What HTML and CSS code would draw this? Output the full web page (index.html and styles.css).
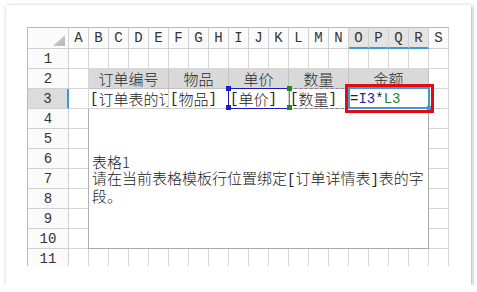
FILE: index.html
```html
<!DOCTYPE html>
<html>
<head>
<meta charset="utf-8">
<link rel="stylesheet" href="styles.css">
</head>
<body>
<div class="card">
  <div class="sheet">
    <div class="corner"><span class="tri"></span></div>
    <div class="ch">A</div><div class="ch">B</div><div class="ch">C</div><div class="ch">D</div><div class="ch">E</div>
    <div class="ch">F</div><div class="ch">G</div><div class="ch">H</div><div class="ch">I</div><div class="ch">J</div>
    <div class="ch">K</div><div class="ch">L</div><div class="ch">M</div><div class="ch">N</div>
    <div class="ch sel">O</div><div class="ch sel">P</div><div class="ch sel">Q</div><div class="ch sel">R</div>
    <div class="ch">S</div>
    <div class="rh">1</div>
    <div class="rh">2</div>
    <div class="rh sel">3</div>
    <div class="rh">4</div>
    <div class="rh">5</div>
    <div class="rh">6</div>
    <div class="rh">7</div>
    <div class="rh">8</div>
    <div class="rh">9</div>
    <div class="rh">10</div>
    <div class="rh">11</div>

    <div class="hd c-b">订单编号</div>
    <div class="hd c-f">物品</div>
    <div class="hd c-i">单价</div>
    <div class="hd c-l">数量</div>
    <div class="hd c-o">金额</div>

    <div class="dt c-b"><span class="br">[</span>订单表的订单编号<span class="br">]</span></div>
    <div class="dt c-f"><span class="br">[</span>物品<span class="br">]</span></div>
    <div class="dt c-i"><span class="br">[</span>单价<span class="br">]</span></div>
    <div class="dt c-l"><span class="br">[</span>数量<span class="br">]</span></div>
    <div class="dt c-o"><span class="formula">=<span class="ref-i">I3</span>*<span class="ref-l">L3</span></span></div>

    <div class="region"><p class="note">表格1<br>请在当前表格模板行位置绑定<span class="br">[</span>订单详情表<span class="br">]</span>表的字段。</p></div>

    <div class="sel-blue"></div>
    <div class="sel-dash"></div>
    <div class="sel-teal"></div>
    <div class="handle blue h1"></div>
    <div class="handle blue h2"></div>
    <div class="handle green h3"></div>
    <div class="handle green h4"></div>
    <div class="handle teal h5"></div>
    <div class="redbox"></div>
  </div>
</div>
</body>
</html>
```

FILE: styles.css
```css
html, body {
  margin: 0;
  background: #ffffff;
}

.card {
  margin: 5px 0 0 6px;
  width: 465px;
  height: 280px;
  box-sizing: border-box;
  padding: 22px 0 0 21px;
  background: #ffffff;
  box-shadow: 1px 1px 4px rgba(0, 0, 0, 0.35);
}

.sheet {
  position: relative;
  display: grid;
  grid-template-columns: 41px repeat(19, 20px);
  grid-template-rows: 21px repeat(11, 20px);
  width: 421px;
  height: 238px;
  overflow: hidden;
  border-left: 1px solid #b9b9b9;
  border-top: 1px solid #b9b9b9;
  background-color: #ffffff;
  background-image:
    linear-gradient(to right, #d6d6d6 1px, transparent 1px),
    linear-gradient(to bottom, #d6d6d6 1px, transparent 1px);
  background-size: 20px 20px;
  font-family: "Noto Sans CJK SC", sans-serif;
  font-weight: 300;
  font-size: 15px;
  color: #222222;
}

.corner, .ch, .rh {
  box-sizing: border-box;
  border-right: 1px solid #d0d0d0;
  border-bottom: 1px solid #d0d0d0;
  background: #fbfbfb;
  font-family: "Liberation Mono", monospace;
  font-weight: 400;
  font-size: 14px;
  line-height: 16px;
  color: #333333;
  display: flex;
  align-items: center;
  justify-content: center;
}

.rh {
  grid-column: 1;
}

.corner {
  justify-content: flex-end;
  align-items: flex-end;
  padding: 0 3px 2px 0;
}

.tri {
  width: 12px;
  height: 11px;
  background: linear-gradient(135deg, #d8d8d8, #b4b4b4);
  clip-path: polygon(100% 0, 100% 100%, 0 100%);
}

.ch.sel {
  background: #e4e4e4;
  border-bottom: 2px solid #3d9bd2;
}

.rh.sel {
  background: #dcdcdc;
  border-right: 2px solid #3d9bd2;
}

.c-b { grid-column: 3 / 7; }
.c-f { grid-column: 7 / 10; }
.c-i { grid-column: 10 / 13; }
.c-l { grid-column: 13 / 16; }
.c-o { grid-column: 16 / 20; }

.hd {
  grid-row: 3;
  box-sizing: border-box;
  background: #d9d9d9;
  border-right: 1px solid #c2c2c2;
  border-bottom: 1px solid #c2c2c2;
  display: flex;
  align-items: center;
  justify-content: center;
  line-height: 18px;
  color: #2a2a2a;
}

.dt {
  grid-row: 4;
  box-sizing: border-box;
  background: #ffffff;
  border-right: 1px solid #d0d0d0;
  border-bottom: 1px solid #d0d0d0;
  display: flex;
  align-items: center;
  padding-left: 1px;
  line-height: 18px;
  white-space: nowrap;
  overflow: hidden;
}

.br {
  font-family: "Liberation Mono", monospace;
  font-weight: 400;
  font-size: 14px;
}

.formula {
  font-family: "Liberation Mono", monospace;
  font-weight: 400;
  font-size: 14px;
  color: #222222;
}

.ref-i { color: #2424a8; }
.ref-l { color: #2b7f2b; }

.region {
  grid-column: 3 / 20;
  grid-row: 5 / 12;
  box-sizing: border-box;
  margin-left: -1px;
  background: #ffffff;
  border-left: 1px solid #b0b0b0;
  border-right: 1px solid #a8a8a8;
  border-bottom: 1px solid #a8a8a8;
  display: flex;
  align-items: center;
  padding: 0 0 0 3px;
}

.note {
  margin: 0;
  line-height: 16px;
}

.sel-blue {
  position: absolute;
  left: 200px;
  top: 60px;
  width: 62px;
  height: 21px;
  box-sizing: border-box;
  border: 1px solid #1a1ab8;
}

.sel-dash {
  position: absolute;
  left: 261px;
  top: 60px;
  width: 60px;
  height: 21px;
  box-sizing: border-box;
  border: 1px dashed #2b8a2b;
  outline: 1px solid rgba(230, 140, 230, 0.45);
  outline-offset: -1px;
}

.sel-teal {
  position: absolute;
  left: 320px;
  top: 59px;
  width: 82px;
  height: 22px;
  box-sizing: border-box;
  border: 2px solid #3f9ccc;
}

.handle {
  position: absolute;
  width: 5px;
  height: 5px;
}

.blue { background: #1a1ad0; }
.green { background: #1d8a1d; }
.teal { background: #3f9ccc; width: 4px; height: 4px; }

.h1 { left: 198px; top: 58px; }
.h2 { left: 198px; top: 77px; }
.h3 { left: 259px; top: 58px; }
.h4 { left: 259px; top: 77px; }
.h5 { left: 399px; top: 78px; }

.redbox {
  position: absolute;
  left: 317px;
  top: 56px;
  width: 89px;
  height: 29px;
  box-sizing: border-box;
  border: 3px solid #e20a14;
}
```
